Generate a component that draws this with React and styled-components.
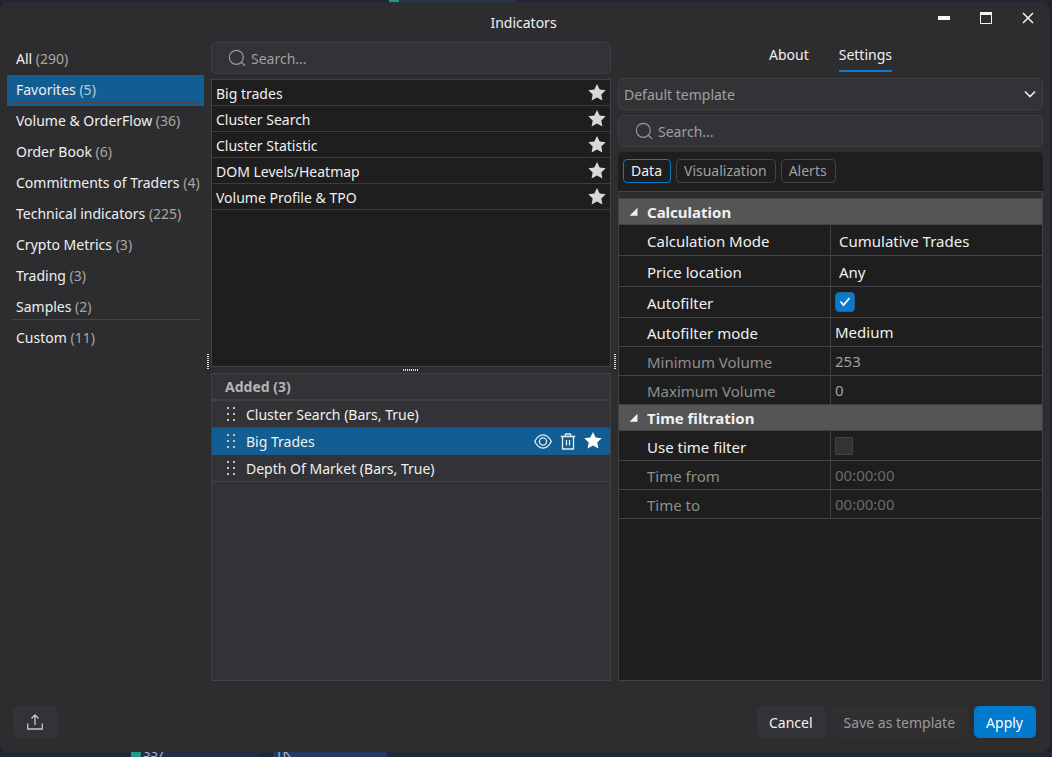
import React, { useState } from "react";
import styled, { createGlobalStyle, css } from "styled-components";

const Global = createGlobalStyle`
  *, *::before, *::after { box-sizing: border-box; }
  body { margin: 0; background: #1c2230; }
  body, button, input, select {
    font-family: "Noto Sans", "Open Sans", sans-serif;
    font-size: 14px;
    line-height: 20px;
    color: #f0f0f0;
  }
  button, input, select { border: 0; padding: 0; margin: 0; background: none; outline: none; }
  button { cursor: pointer; }
  h1, h2, ul { margin: 0; padding: 0; font-size: inherit; font-weight: inherit; list-style: none; }
`;

const line = "#414146";

const Page = styled.div`
  min-height: 100vh;
  display: flex;
  flex-direction: column;
`;

const ChartStrip = styled.div`
  flex: none;
  display: flex;
  height: ${(p) => p.$height}px;
  padding-left: ${(p) => p.$start}px;
  overflow: hidden;
  background: #212736;
`;

const ChartBar = styled.div`
  width: ${(p) => p.$width}px;
  padding-left: ${(p) => (p.$inset ? 2 : 0)}px;
  margin-right: ${(p) => p.$gap || 0}px;
  background: ${(p) => p.$color};
  color: #b4b8c4;
  font-size: 13px;
  line-height: 0;
`;

const Dialog = styled.main`
  flex: 1;
  display: flex;
  flex-direction: column;
  margin-right: 2px;
  border-radius: 8px;
  background: #2d2d2f;
`;

const TitleBar = styled.header`
  display: grid;
  grid-template-columns: 1fr auto 1fr;
  align-items: start;
  height: 40px;
`;

const Title = styled.h1`
  grid-column: 2;
  padding: 11px 3px 0 0;
`;

const WindowButtons = styled.div`
  justify-self: end;
  display: flex;
  padding-right: 1px;
`;

const WindowButton = styled.button`
  width: 42px;
  height: 32px;
  display: grid;
  place-items: center;
`;

const Body = styled.div`
  flex: 1;
  display: grid;
  grid-template-columns: 197px 7px minmax(0, 400fr) 7px minmax(0, 425fr);
  padding: 0 7px;
`;

const Sidebar = styled.nav`
  padding-top: 2px;
`;

const Category = styled.button`
  display: block;
  width: 100%;
  height: 31px;
  padding: 0 4px 3px;
  text-align: left;
  background: ${(p) => (p.$selected ? "#125e92" : "transparent")};
`;

const CategoryLabel = styled.span`
  display: block;
  height: 28px;
  padding: 5px 0 0 5px;
  line-height: 20px;
  white-space: nowrap;
  border-bottom: 1px solid ${(p) => (p.$divided ? "#454549" : "transparent")};
`;

const Count = styled.span`
  color: ${(p) => (p.$selected ? "#b9cfdf" : "#a6a6a6")};
`;

const Splitter = styled.div`
  display: flex;
  justify-content: center;
  align-items: ${(p) => (p.$row ? "center" : "flex-start")};
  padding-top: ${(p) => (p.$row ? 0 : 312)}px;
  height: ${(p) => (p.$row ? "6px" : "auto")};
`;

const Grip = styled.span`
  width: ${(p) => (p.$row ? 16 : 2)}px;
  height: ${(p) => (p.$row ? 2 : 16)}px;
  background: repeating-linear-gradient(
    ${(p) => (p.$row ? "to right" : "to bottom")},
    #e0e0e0 0 1px,
    transparent 1px 2px
  );
`;

const Column = styled.section`
  display: flex;
  flex-direction: column;
  min-width: 0;
`;

const SearchBox = styled.label`
  display: flex;
  align-items: center;
  gap: 5px;
  height: 32px;
  padding: 0 16px;
  border: 1px solid #3f3f43;
  border-radius: 5px;
  background: #333337;
`;

const SearchInput = styled.input`
  flex: 1;
  min-width: 0;
  padding-top: 2px;
  &::placeholder { color: #a0a0a0; opacity: 1; }
`;

const IndicatorList = styled.ul`
  flex: 288 1 0;
  margin-top: 5px;
  border: 1px solid ${line};
  background: #1e1e1e;
`;

const IndicatorRow = styled.li`
  display: flex;
  align-items: center;
  justify-content: space-between;
  height: 26px;
  padding: 0 4px;
  border-bottom: 1px solid #3c3c3f;
`;

const IndicatorName = styled.span`
  padding-top: 2px;
`;

const IconButton = styled.button`
  display: grid;
  place-items: center;
`;

const AddedPanel = styled.section`
  flex: 308 1 0;
  border: 1px solid ${line};
  background: #333337;
`;

const AddedHeading = styled.h2`
  height: 27px;
  padding: 3px 13px;
  border-bottom: 2px solid ${line};
  color: #b4b4b4;
  font-weight: 700;
`;

const AddedRow = styled.li`
  display: flex;
  align-items: center;
  height: 27px;
  padding: 0 8px 0 14px;
  gap: 10px;
  border-bottom: 1px solid ${(p) => (p.$selected ? "#125e92" : line)};
  background: ${(p) => (p.$selected ? "#125e92" : "transparent")};
`;

const AddedName = styled.span`
  flex: 1;
  padding-top: 2px;
`;

const RowActions = styled.span`
  display: flex;
  align-items: center;
  gap: 8px;
`;

const Tabs = styled.div`
  display: flex;
  justify-content: center;
  gap: 30px;
  height: 30px;
  margin-bottom: 6px;
`;

const Tab = styled.button`
  height: 30px;
  padding-bottom: 2px;
  border-bottom: 2px solid ${(p) => (p.$selected ? "#0a7acb" : "transparent")};
`;

const TemplateField = styled.div`
  display: grid;
  margin-bottom: 5px;
  align-items: center;
  & > * { grid-area: 1 / 1; }
  & > svg { justify-self: end; margin-right: 7px; pointer-events: none; }
`;

const TemplateSelect = styled.select`
  appearance: none;
  height: 32px;
  padding: 2px 5px 0;
  border: 1px solid #3f3f43;
  border-radius: 5px;
  background: #333337;
  color: #a0a0a0;
`;

const SettingsPanel = styled.div`
  flex: 1;
  display: flex;
  flex-direction: column;
  margin-top: 5px;
`;

const FilterBar = styled.div`
  display: flex;
  gap: 5px;
  height: 39px;
  padding: 7px 5px 8px;
  border-radius: 5px 5px 0 0;
  background: #1e1e1e;
`;

const FilterButton = styled.button`
  padding: 0 8px 0 7px;
  line-height: 20px;
  border: 1px solid ${(p) => (p.$selected ? "#0a7acb" : "#424246")};
  border-radius: 4px;
  color: ${(p) => (p.$selected ? "#f0f0f0" : "#a0a0a0")};
`;

const PropertyGrid = styled.div`
  flex: 1;
  border: 1px solid ${line};
  background: #1e1e1e;
`;

const GridSpacer = styled.div`
  height: 6px;
  background: #2d2d2f;
`;

const GroupHeading = styled.h2`
  display: flex;
  align-items: center;
  gap: 9px;
  height: ${(p) => (p.$first ? 27 : 26)}px;
  padding-left: 10px;
  border-top: ${(p) => (p.$first ? 1 : 0)}px solid ${line};
  border-bottom: 1px solid ${line};
  background: #555555;
  font-size: 15px;
  font-weight: 700;
`;

const Property = styled.div`
  display: grid;
  grid-template-columns: 212px minmax(0, 1fr);
  height: ${(p) => p.$height}px;
  border-bottom: 1px solid ${line};
  font-size: 15px;
`;

const muted = css`color: #8e8e8e;`;

const PropertyLabel = styled.label`
  display: flex;
  align-items: center;
  padding: 2px 0 0 28px;
  border-right: 1px solid ${line};
  ${(p) => p.$muted && muted}
`;

const valueStyle = css`
  width: 100%;
  height: 100%;
  appearance: none;
  font-size: 15px;
  padding-left: ${(p) => (p.$inset ? 8 : 4)}px;
  padding-top: ${(p) => (p.$inset ? 2 : 0)}px;
  opacity: 1;
  color: ${(p) => p.$color || "#f0f0f0"};
`;
const ValueSelect = styled.select`${valueStyle}`;
const ValueInput = styled.input`${valueStyle}`;

const CheckCell = styled.span`
  display: grid;
  align-items: center;
  padding-left: 4px;
  & > * { grid-area: 1 / 1; }
  & > svg { margin-left: 4px; pointer-events: none; }
`;

const Checkbox = styled.input`
  appearance: none;
  width: ${(p) => (p.checked ? 20 : 18)}px;
  height: ${(p) => (p.checked ? 20 : 18)}px;
  border: 1px solid ${(p) => (p.checked ? "#24659a" : "#414146")};
  border-radius: ${(p) => (p.checked ? 4 : 0)}px;
  background: ${(p) => (p.checked ? "#0a7acb" : "#333337")};
`;

const Footer = styled.footer`
  display: flex;
  gap: 6px;
  padding: 25px 14px 14px 13px;
`;

const FooterButton = styled.button`
  height: 32px;
  padding: 2px 13px 0 12px;
  border-radius: 5px;
  background: ${(p) => p.$bg || "#333337"};
  color: ${(p) => p.$color || "#f0f0f0"};
`;

const ExportButton = styled(FooterButton)`
  display: grid;
  place-items: center;
  width: 45px;
  padding: 0 1px 0 0;
  margin-right: auto;
`;

const Star = ({ color = "#d8d8d8" }) => (
  <svg width="18" height="18" viewBox="0 0 18 18" aria-hidden="true">
    <path fill={color} d="M9 0l2.700 5.500 6 .8-4.400 4.200 1.100 6L9 13.600 3.600 16.500l1.100-6L.3 6.300l6-.8z" />
  </svg>
);

const Magnifier = () => (
  <svg width="18" height="18" viewBox="0 0 18 18" fill="none" stroke="#9a9a9a" strokeWidth="1.200" aria-hidden="true">
    <circle cx="8.300" cy="8.300" r="7" />
    <path d="m13.300 13.300 3.700 3.500" />
  </svg>
);

const Handle = () => (
  <svg width="10" height="14" viewBox="0 0 10 14" fill="#c4c4c4" aria-hidden="true">
    {[0, 6, 12].map((y) => [1, 7].map((x) => <rect key={`${x}-${y}`} x={x} y={y} width="2" height="2" />))}
  </svg>
);

const Eye = () => (
  <svg width="18" height="16" viewBox="0 0 18 16" fill="none" stroke="#e6edf3" strokeWidth="1.300" aria-hidden="true">
    <path d="M.7 8.500C3 4 6 1.900 9 1.900S15 4 17.300 8.500C15 13 12 15.100 9 15.100S3 13 .7 8.500z" />
    <circle cx="9" cy="8.500" r="3.600" />
  </svg>
);

const Trash = () => (
  <svg width="16" height="17" viewBox="0 0 16 17" fill="none" stroke="#e6edf3" strokeWidth="1.300" aria-hidden="true">
    <path d="M.8 3.500h14.400M4.800 3.500l1-2.500h4.400l1 2.500M2.500 3.500v12.500h11V3.500M6.500 7v5.500M9.500 7v5.500" />
  </svg>
);

const Arrow = () => (
  <svg width="9" height="9" viewBox="0 0 9 9" aria-hidden="true">
    <path fill="#f0f0f0" d="M8.500 .8V8.800H.5z" />
  </svg>
);

const categories = [
  ["All", 290], ["Favorites", 5], ["Volume & OrderFlow", 36], ["Order Book", 6],
  ["Commitments of Traders", 4], ["Technical indicators", 225], ["Crypto Metrics", 3],
  ["Trading", 3], ["Samples", 2], ["Custom", 11],
];
const divided = ["Favorites", "Samples"];
const indicators = ["Big trades", "Cluster Search", "Cluster Statistic", "DOM Levels/Heatmap", "Volume Profile & TPO"];
const added = ["Cluster Search (Bars, True)", "Big Trades", "Depth Of Market (Bars, True)"];

function Search({ label }) {
  return (
    <SearchBox>
      <Magnifier />
      <SearchInput type="text" placeholder="Search..." aria-label={label} />
    </SearchBox>
  );
}

function SelectProperty({ id, label, value, height, inset }) {
  return (
    <Property $height={height}>
      <PropertyLabel htmlFor={id}>{label}</PropertyLabel>
      <ValueSelect id={id} $inset={inset} defaultValue={value}><option>{value}</option></ValueSelect>
    </Property>
  );
}

function InputProperty({ id, label, value, color }) {
  return (
    <Property $height={29}>
      <PropertyLabel htmlFor={id} $muted>{label}</PropertyLabel>
      <ValueInput id={id} type="text" defaultValue={value} disabled $color={color} />
    </Property>
  );
}

function CheckProperty({ id, label, initial, height }) {
  const [on, setOn] = useState(initial);
  return (
    <Property $height={height}>
      <PropertyLabel htmlFor={id}>{label}</PropertyLabel>
      <CheckCell>
        <Checkbox id={id} type="checkbox" checked={on} onChange={() => setOn(!on)} />
        {on && (
          <svg width="12" height="10" viewBox="0 0 12 10" fill="none" stroke="#fff" strokeWidth="1.800" aria-hidden="true">
            <path d="m1.500 4.500 3 3.500L10.500 1" />
          </svg>
        )}
      </CheckCell>
    </Property>
  );
}

export default function App() {
  const [category, setCategory] = useState("Favorites");
  return (
    <Page>
      <Global />
      <ChartStrip $height={2} $start={389}>
        <ChartBar $width={10} $color="#1c9c84" />
        <ChartBar $width={116} $color="#253358" />
      </ChartStrip>
      <Dialog>
        <TitleBar>
          <Title>Indicators</Title>
          <WindowButtons>
            <WindowButton aria-label="Minimize">
              <svg width="12" height="12"><path fill="#f5f5f5" d="M0 4h12v4H0z" /></svg>
            </WindowButton>
            <WindowButton aria-label="Maximize">
              <svg width="12" height="12"><path fill="#f5f5f5" fillRule="evenodd" d="M0 0h12v12H0zM1 3v8h10V3z" /></svg>
            </WindowButton>
            <WindowButton aria-label="Close">
              <svg width="12" height="12" stroke="#f5f5f5" strokeWidth="1.500"><path d="m1 1 10 10M11 1 1 11" /></svg>
            </WindowButton>
          </WindowButtons>
        </TitleBar>
        <Body>
          <Sidebar aria-label="Categories">
            {categories.map(([name, count]) => (
              <Category key={name} $selected={name === category} onClick={() => setCategory(name)}>
                <CategoryLabel $divided={divided.includes(name)}>
                  {name} <Count $selected={name === category}>({count})</Count>
                </CategoryLabel>
              </Category>
            ))}
          </Sidebar>
          <Splitter><Grip /></Splitter>
          <Column>
            <Search label="Search indicators" />
            <IndicatorList>
              {indicators.map((name) => (
                <IndicatorRow key={name}>
                  <IndicatorName>{name}</IndicatorName>
                  <IconButton aria-label={`Favorite ${name}`}><Star /></IconButton>
                </IndicatorRow>
              ))}
            </IndicatorList>
            <Splitter $row><Grip $row /></Splitter>
            <AddedPanel>
              <AddedHeading>Added (3)</AddedHeading>
              <ul>
                {added.map((name) => (
                  <AddedRow key={name} $selected={name === "Big Trades"}>
                    <Handle />
                    <AddedName>{name}</AddedName>
                    {name === "Big Trades" && (
                      <RowActions>
                        <IconButton aria-label="Show"><Eye /></IconButton>
                        <IconButton aria-label="Remove"><Trash /></IconButton>
                        <IconButton aria-label="Favorite"><Star color="#fff" /></IconButton>
                      </RowActions>
                    )}
                  </AddedRow>
                ))}
              </ul>
            </AddedPanel>
          </Column>
          <Splitter><Grip /></Splitter>
          <Column>
            <Tabs role="tablist">
              <Tab role="tab">About</Tab>
              <Tab role="tab" aria-selected="true" $selected>Settings</Tab>
            </Tabs>
            <TemplateField>
              <TemplateSelect aria-label="Template"><option>Default template</option></TemplateSelect>
              <svg width="12" height="8" viewBox="0 0 12 8" fill="none" stroke="#f0f0f0" strokeWidth="1.600" aria-hidden="true">
                <path d="m1 1.500 5 5 5-5" />
              </svg>
            </TemplateField>
            <Search label="Search settings" />
            <SettingsPanel>
              <FilterBar>
                <FilterButton $selected>Data</FilterButton>
                <FilterButton>Visualization</FilterButton>
                <FilterButton>Alerts</FilterButton>
              </FilterBar>
              <PropertyGrid>
                <GridSpacer />
                <GroupHeading $first><Arrow />Calculation</GroupHeading>
                <SelectProperty id="mode" label="Calculation Mode" value="Cumulative Trades" height={31} inset />
                <SelectProperty id="price" label="Price location" value="Any" height={31} inset />
                <CheckProperty id="autofilter" label="Autofilter" initial height={31} />
                <SelectProperty id="filter-mode" label="Autofilter mode" value="Medium" height={29} />
                <InputProperty id="min" label="Minimum Volume" value="253" color="#a0a0a0" />
                <InputProperty id="max" label="Maximum Volume" value="0" color="#a0a0a0" />
                <GroupHeading><Arrow />Time filtration</GroupHeading>
                <CheckProperty id="use-time" label="Use time filter" initial={false} height={30} />
                <InputProperty id="from" label="Time from" value="00:00:00" color="#6a6a6a" />
                <InputProperty id="to" label="Time to" value="00:00:00" color="#6a6a6a" />
              </PropertyGrid>
            </SettingsPanel>
          </Column>
        </Body>
        <Footer>
          <ExportButton aria-label="Export">
            <svg width="16" height="16" viewBox="0 0 16 16" fill="none" stroke="#c8c8c8" strokeWidth="1.300">
              <path d="M.7 9.500v5.500h14.600V9.500M8 11V1.500M4.500 4.500 8 1l3.500 3.500" />
            </svg>
          </ExportButton>
          <FooterButton>Cancel</FooterButton>
          <FooterButton $bg="#303033" $color="#9a9a9a">Save as template</FooterButton>
          <FooterButton $bg="#007acc" $color="#fff">Apply</FooterButton>
        </Footer>
      </Dialog>
      <ChartStrip $height={5} $start={131}>
        <ChartBar $width={10} $color="#1c9c84" />
        <ChartBar $width={117} $gap={15} $color="#232b45" $inset>337</ChartBar>
        <ChartBar $width={114} $color="#243566" $inset>1K</ChartBar>
      </ChartStrip>
    </Page>
  );
}
